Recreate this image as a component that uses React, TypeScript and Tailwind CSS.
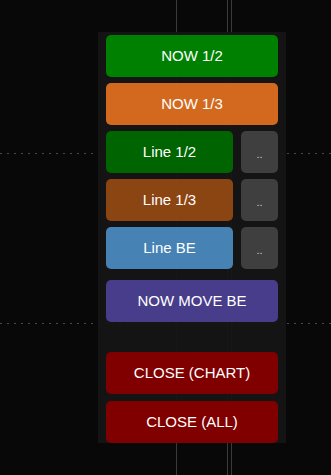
import React from "react";

const Btn = ({ label, cls, extra = "" }: { label: string; cls: string; extra?: string }) => (
  <button
    className={`h-[42px] rounded-[5px] text-white text-[15px] flex items-center justify-center ${cls} ${extra}`}
    style={{ fontFamily: '"Liberation Sans", Arial, sans-serif' }}
  >
    {label}
  </button>
);

const Small = () => (
  <button
    className="h-[42px] w-[37px] rounded-[5px] bg-[#3f3f3f] text-[#d0d0d0] text-[11px] flex items-center justify-center pt-[4px]"
    style={{ fontFamily: '"Liberation Sans", Arial, sans-serif' }}
  >
    ..
  </button>
);

export default function App() {
  return (
    <div className="relative w-[331px] h-[475px] bg-[#080808] overflow-hidden">
      {/* chart grid lines */}
      <div className="absolute left-[176px] top-0 h-full w-px bg-[#3a3a3a]" />
      <div className="absolute left-[227px] top-0 h-full w-px bg-[#3a3a3a]" />
      <div className="absolute left-[231px] top-0 h-full w-px bg-[#3a3a3a]" />
      <div className="absolute left-0 top-[153px] w-full h-px bg-[repeating-linear-gradient(90deg,#4a4a4a_0px,#4a4a4a_2px,transparent_2px,transparent_7px)]" />
      <div className="absolute left-0 top-[323px] w-full h-px bg-[repeating-linear-gradient(90deg,#4a4a4a_0px,#4a4a4a_2px,transparent_2px,transparent_7px)]" />

      {/* panel */}
      <div className="absolute left-[98px] top-[32px] w-[188px] h-[411px] bg-[#151515]/95 px-2 pt-[3px] flex flex-col">
        <Btn label="NOW 1/2" cls="bg-[#008000]" />
        <Btn label="NOW 1/3" cls="bg-[#d2691e]" extra="mt-[6px]" />
        <div className="flex gap-2 mt-[6px]">
          <Btn label="Line 1/2" cls="bg-[#006400] w-[127px]" />
          <Small />
        </div>
        <div className="flex gap-2 mt-[6px]">
          <Btn label="Line 1/3" cls="bg-[#8b4513] w-[127px]" />
          <Small />
        </div>
        <div className="flex gap-2 mt-[6px]">
          <Btn label="Line BE" cls="bg-[#4682b4] w-[127px]" />
          <Small />
        </div>
        <Btn label="NOW MOVE BE" cls="bg-[#483d8b]" extra="mt-[11px]" />
        <Btn label="CLOSE (CHART)" cls="bg-[#800000]" extra="mt-[30px]" />
        <Btn label="CLOSE (ALL)" cls="bg-[#800000]" extra="mt-[7px]" />
      </div>
    </div>
  );
}
